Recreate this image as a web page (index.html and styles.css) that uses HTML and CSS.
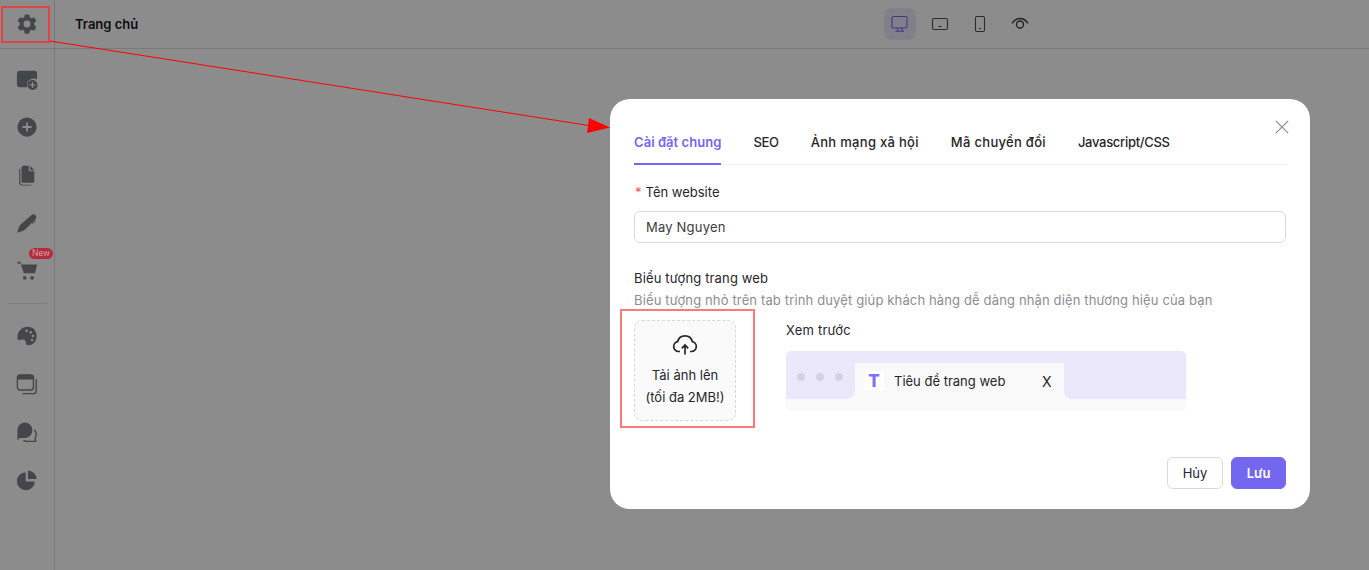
FILE: index.html
```html
<!DOCTYPE html>
<html lang="vi">
<head>
<meta charset="utf-8">
<title>Trang chủ</title>
<link rel="stylesheet" href="styles.css">
</head>
<body>
<div class="app">
  <aside class="sidebar">
    <div class="side-top">
      <svg class="ic" viewBox="0 0 24 24"><path fill-rule="evenodd" d="M9.600 1.500h4.800l.6 3 1.900 1.100 2.900-1 2.400 4.200-2.300 2a7 7 0 0 1 0 2.400l2.300 2-2.400 4.200-2.900-1-1.900 1.100-.6 3H9.600l-.6-3-1.900-1.100-2.900 1-2.400-4.200 2.300-2a7 7 0 0 1 0-2.400l-2.300-2 2.400-4.200 2.900 1L9 4.500zM12 8.300a3.700 3.700 0 1 0 0 7.400 3.700 3.700 0 0 0 0-7.400z"/></svg>
    </div>
    <div class="side-group side-group-first">
      <div class="side-item"><svg class="ic" viewBox="0 0 24 24"><path d="M4 3h16a3 3 0 0 1 3 3v6.500a7.500 7.500 0 0 0-10.800 8.500H4a3 3 0 0 1-3-3V6a3 3 0 0 1 3-3z"/><path fill-rule="evenodd" d="M18 13a5.500 5.500 0 1 1 0 11 5.500 5.500 0 0 1 0-11zm-.7 2.300v2.500h-2.500v1.400h2.500v2.500h1.400v-2.500h2.500v-1.400h-2.500v-2.500z"/></svg></div>
      <div class="side-item"><svg class="ic" viewBox="0 0 24 24"><path fill-rule="evenodd" d="M12 1.500a10.500 10.500 0 1 1 0 21 10.500 10.500 0 0 1 0-21zM11 7v4H7v2h4v4h2v-4h4v-2h-4V7z"/></svg></div>
      <div class="side-item"><svg class="ic" viewBox="0 0 24 24"><path d="M8 2h6v6h6v11a1.500 1.500 0 0 1-1.500 1.500h-11A1.500 1.500 0 0 1 6 19V4a2 2 0 0 1 2-2z"/><path d="M15.500 2.200 20 6.700h-4.500z"/><path d="M4.800 5v15a2.500 2.500 0 0 0 2.500 2.500H17v1H7A3.500 3.500 0 0 1 3.500 20V6.500A1.500 1.500 0 0 1 4.800 5z"/></svg></div>
      <div class="side-item"><svg class="ic" viewBox="0 0 24 24"><path d="M17 3.200a3.200 3.200 0 0 1 4.500 4.500L10 19.200c-2 1.700-5 2.600-8.500 3.300.7-3.500 1.600-6.500 3.300-8.500z"/><path d="M21.500 9.500 18 13l-.8-.8 3.500-3.500z"/></svg></div>
      <div class="side-item"><svg class="ic" viewBox="0 0 24 24"><path d="M1.500 2h3.200l.8 3H23l-2.200 9.500H8.500L5.200 4.300 1.500 3.500z"/><circle cx="9.500" cy="19.500" r="2"/><circle cx="17.500" cy="19.500" r="2"/></svg><span class="badge">New</span></div>
    </div>
    <div class="side-sep"></div>
    <div class="side-group">
      <div class="side-item"><svg class="ic" viewBox="0 0 24 24"><path fill-rule="evenodd" d="M13 2c5.500 0 9.500 4.300 9.500 10 0 5.800-4 10-8.500 10-2.200 0-3.300-1.400-3.300-3 0-2-1.400-3.200-3.700-3.200-1.600 0-2.200.8-3.700.8C2.200 16.600 1.500 15 1.500 13 1.500 7 6.500 2 13 2zM11.500 5a1.400 1.400 0 1 0 0 2.800 1.400 1.400 0 0 0 0-2.800zm4.500 1.500a1.400 1.400 0 1 0 0 2.800 1.400 1.400 0 0 0 0-2.800zm2.500 4a1.400 1.400 0 1 0 0 2.800 1.400 1.400 0 0 0 0-2.800zm-1 4.500a1.400 1.400 0 1 0 0 2.800 1.400 1.400 0 0 0 0-2.800z"/></svg></div>
      <div class="side-item"><svg class="ic" viewBox="0 0 24 24" fill="none"><rect class="st" x="1.500" y="2" width="17.500" height="16.500" rx="3"/><path d="M4.500 2h12A2.500 2.500 0 0 1 19 4.500V7H2V4.500A2.500 2.500 0 0 1 4.500 2z"/><path class="st" d="M22 6.500v13a3 3 0 0 1-3 3H7"/></svg></div>
      <div class="side-item"><svg class="ic" viewBox="0 0 24 24"><path d="M9.500 1.500a8.500 8.500 0 0 1 0 17H4l-2.500 2.500v-11a8.500 8.500 0 0 1 8-8.500z"/><path class="st" d="M20 9.500c1.300 1.500 2 3 2 5 0 2-.5 3.300-1.300 4.500l.8 3.200H12c-1.500 0-2.800-.3-4-1"/></svg></div>
      <div class="side-item"><svg class="ic" viewBox="0 0 24 24"><path d="M10.500 3.500V13.500h10A9.800 9.800 0 1 1 10.500 3.500z"/><path d="M13 1.500a9.500 9.500 0 0 1 9.500 9.500H13z"/></svg></div>
    </div>
  </aside>
  <div class="main">
    <header class="topbar">
      <span class="page-name">Trang chủ</span>
      <div class="devices">
        <span class="dev active"><svg viewBox="0 0 20 20" fill="none"><rect x="2" y="2.500" width="15" height="11.500" rx="1.500"/><path d="M7.500 14v3M12 14v3M5.500 17.200h8.500"/></svg></span>
        <span class="dev"><svg viewBox="0 0 20 20" fill="none"><rect x="2.500" y="4.500" width="15" height="11" rx="1.500"/><path d="M8.500 12.500h3"/></svg></span>
        <span class="dev"><svg viewBox="0 0 20 20" fill="none"><rect x="5.500" y="2.500" width="9" height="15" rx="1.500"/><path d="M9 14.500h2"/></svg></span>
        <span class="dev"><svg class="eye" viewBox="0 0 20 20" fill="none"><path d="M2 9.500C4 6 7 4.500 10 4.500s6 1.500 8 5"/><circle cx="10" cy="10.500" r="3.500"/></svg></span>
      </div>
    </header>
  </div>
</div>

<div class="overlay"></div>

<section class="modal">
  <svg class="close" viewBox="0 0 14 14" fill="none"><path d="M.8.8l12.400 12.400M13.200.8.800 13.200"/></svg>
  <nav class="tabs">
    <span class="tab on">Cài đặt chung</span>
    <span class="tab latin">SEO</span>
    <span class="tab">Ảnh mạng xã hội</span>
    <span class="tab">Mã chuyển đổi</span>
    <span class="tab latin">Javascript/CSS</span>
  </nav>
  <label class="lbl name-lbl"><span class="req">*</span>Tên website</label>
  <div class="input">May Nguyen</div>
  <div class="lbl icon-lbl">Biểu tượng trang web</div>
  <div class="hint">Biểu tượng nhỏ trên tab trình duyệt giúp khách hàng dễ dàng nhận diện thương hiệu của bạn</div>
  <div class="icon-row">
    <div class="upload">
      <svg viewBox="0 0 26 22" fill="none"><path d="M8 17.500H6.500a5 5 0 0 1-.8-9.900 7.500 7.500 0 0 1 14.600 0 5 5 0 0 1-.8 9.900H18"/><path d="M13 20.500v-9M9.800 14.300 13 11l3.200 3.300"/></svg>
      <span>Tải ảnh lên</span>
      <span>(tối đa 2MB!)</span>
    </div>
    <div class="preview">
      <div class="preview-title">Xem trước</div>
      <div class="browser">
        <div class="chrome">
          <div class="dots"><i></i><i></i><i></i></div>
          <div class="btab">
            <span class="favicon">T</span>
            <span class="btitle">Tiêu đề trang web</span>
            <span class="bx">X</span>
          </div>
          <div class="chrome-rest"></div>
        </div>
      </div>
    </div>
  </div>
  <footer class="actions">
    <button class="btn">Hủy</button>
    <button class="btn primary">Lưu</button>
  </footer>
</section>

<div class="mark mark-gear"></div>
<div class="mark mark-upload"></div>
<svg class="arrow" viewBox="0 0 1369 570" fill="none">
  <path d="M50 41 592 126"/>
  <polygon points="610,127.500 589,118 587,133"/>
</svg>
</body>
</html>
```
FILE: styles.css
```css
* { box-sizing: border-box; }
html, body { margin: 0; height: 570px; overflow: hidden; }
body { font-family: Inter, "Noto Sans", sans-serif; color: #26262a; background: #fff; font-size: 14px; }

.app { display: flex; height: 570px; }
.sidebar { width: 55px; flex: none; border-right: 1px solid #dcdcdc; display: flex; flex-direction: column; align-items: center; }
.side-top { height: 49px; width: 100%; display: flex; align-items: center; justify-content: center; border-bottom: 1px solid #dcdcdc; }
.ic { width: 22px; height: 22px; display: block; fill: #7d8188; }
.ic .st { stroke: #7d8188; stroke-width: 1.500; fill: none; }
.side-group { display: flex; flex-direction: column; gap: 24px; align-items: center; padding-top: 19px; }
.side-group-first { padding-top: 18px; }
.side-item { position: relative; height: 24px; width: 24px; display: flex; align-items: center; justify-content: center; }
.badge { position: absolute; z-index: 1; left: 14px; top: -11px; width: 24px; height: 11px; border-radius: 6px; background: #b42c3c; color: #d9a0a8; font-size: 8.500px; line-height: 11px; text-align: center; }
.side-sep { width: 39px; height: 1px; background: #e6e6e6; margin-top: 20px; margin-bottom: 1px; }

.main { flex: 1; }
.topbar { height: 49px; border-bottom: 1px solid #dcdcdc; display: flex; align-items: center; padding-left: 20px; position: relative; }
.page-name { font-size: 13px; font-weight: 600; width: 809px; color: #1a1a1e; }
.devices { display: flex; gap: 8px; margin-top: -1px; }
.dev { width: 32px; height: 32px; border-radius: 8px; display: flex; align-items: center; justify-content: center; }
.dev svg { width: 20px; height: 20px; stroke: #4f4f55; stroke-width: 1.100; }
.dev svg.eye { stroke: #3a3a40; stroke-width: 1.300; }
.dev.active { background: #ece9fb; }
.dev.active svg { stroke: #7367f0; }

.overlay { position: fixed; inset: 0; background: rgba(0, 0, 0, .45); }

.modal { position: absolute; left: 610px; top: 99px; width: 700px; height: 410px; background: #fff; border-radius: 20px; padding: 24px 24px 20px; display: flex; flex-direction: column; }
.close { position: absolute; right: 21px; top: 21px; width: 14px; height: 14px; stroke: #8a8a8a; stroke-width: 1.200; }
.tabs { display: flex; gap: 32px; border-bottom: 1px solid #f0f0f0; height: 42px; flex: none; }
.tab { font-size: 13px; font-weight: 500; line-height: 38px; height: 42px; white-space: nowrap; letter-spacing: .3px; color: #26262a; }
.tab.latin { letter-spacing: -.3px; }
.tab.on { color: #7367f0; font-weight: 600; border-bottom: 2px solid #7367f0; letter-spacing: .05px; }
.lbl { font-size: 13px; line-height: 18px; color: #26262a; display: block; letter-spacing: .15px; }
.name-lbl { margin-top: 18px; letter-spacing: 0; }
.req { color: #ff4d4f; margin-right: 4px; margin-left: 1px; }
.input { margin-top: 10px; height: 32px; border: 1px solid #d9d9e3; border-radius: 6px; padding: 0 11px; line-height: 30px; font-size: 13px; letter-spacing: .2px; color: #3c3c41; flex: none; }
.icon-lbl { margin-top: 26px; }
.hint { font-size: 13px; line-height: 18px; color: #8d8d93; margin-top: 4px; white-space: nowrap; letter-spacing: .14px; }
.icon-row { display: flex; gap: 50px; margin-top: 11px; }
.upload { width: 102px; height: 101px; border: 1px dashed #d9d9d9; border-radius: 8px; background: #fafafa; display: flex; flex-direction: column; align-items: center; font-size: 13px; line-height: 22px; color: #26262a; padding-top: 13px; }
.upload svg { width: 26px; height: 22px; stroke: #26262a; stroke-width: 1.700; margin-bottom: 8px; }
.upload span { white-space: nowrap; }
.preview { width: 400px; }
.preview-title { font-size: 13px; line-height: 20px; letter-spacing: .2px; }
.browser { margin-top: 11px; height: 60px; border-radius: 6px; background: #f9f9f9; overflow: hidden; }
.chrome { height: 48px; background: linear-gradient(#ece8fc 12px, #f9f9f9 12px); display: flex; align-items: flex-end; }
.dots { display: flex; gap: 11px; padding-left: 11px; width: 69px; height: 48px; align-items: center; padding-top: 4px; background: #ece8fc; border-bottom-right-radius: 8px; }
.dots i { width: 8px; height: 8px; border-radius: 50%; background: #d5d2e4; }
.btab { width: 209px; height: 36px; background: #f9f9f9; border-radius: 8px 8px 0 0; display: flex; align-items: center; padding-left: 9px; }
.chrome-rest { flex: 1; height: 48px; background: #ece8fc; border-bottom-left-radius: 8px; }
.favicon { width: 20px; height: 20px; border-radius: 3px; background: #fff; color: #7c70f5; font-weight: 800; font-size: 17px; line-height: 20px; text-align: center; flex: none; }
.btitle { font-size: 13px; margin-left: 10px; width: 148px; white-space: nowrap; }
.bx { font-size: 14px; }
.actions { margin-top: auto; display: flex; justify-content: flex-end; gap: 8px; }
.btn { height: 32px; width: 56px; border: 1px solid #d9d9e3; border-radius: 6px; background: #fff; font: 400 13px Inter, sans-serif; color: #26262a; padding: 0; }
.btn.primary { width: 55px; background: #7367f0; border-color: #7367f0; color: #fff; font-weight: 600; }

.mark { position: absolute; border: 2px solid #e04444; }
.mark-gear { left: 1px; top: 6px; width: 49px; height: 37px; }
.mark-upload { left: 620px; top: 309px; width: 135px; height: 119px; border-color: #ff7a7a; }
.arrow { position: absolute; left: 0; top: 0; width: 1369px; height: 570px; pointer-events: none; }
.arrow path { stroke: #f00; stroke-width: 1; }
.arrow polygon { fill: #f00; stroke: none; }
```
